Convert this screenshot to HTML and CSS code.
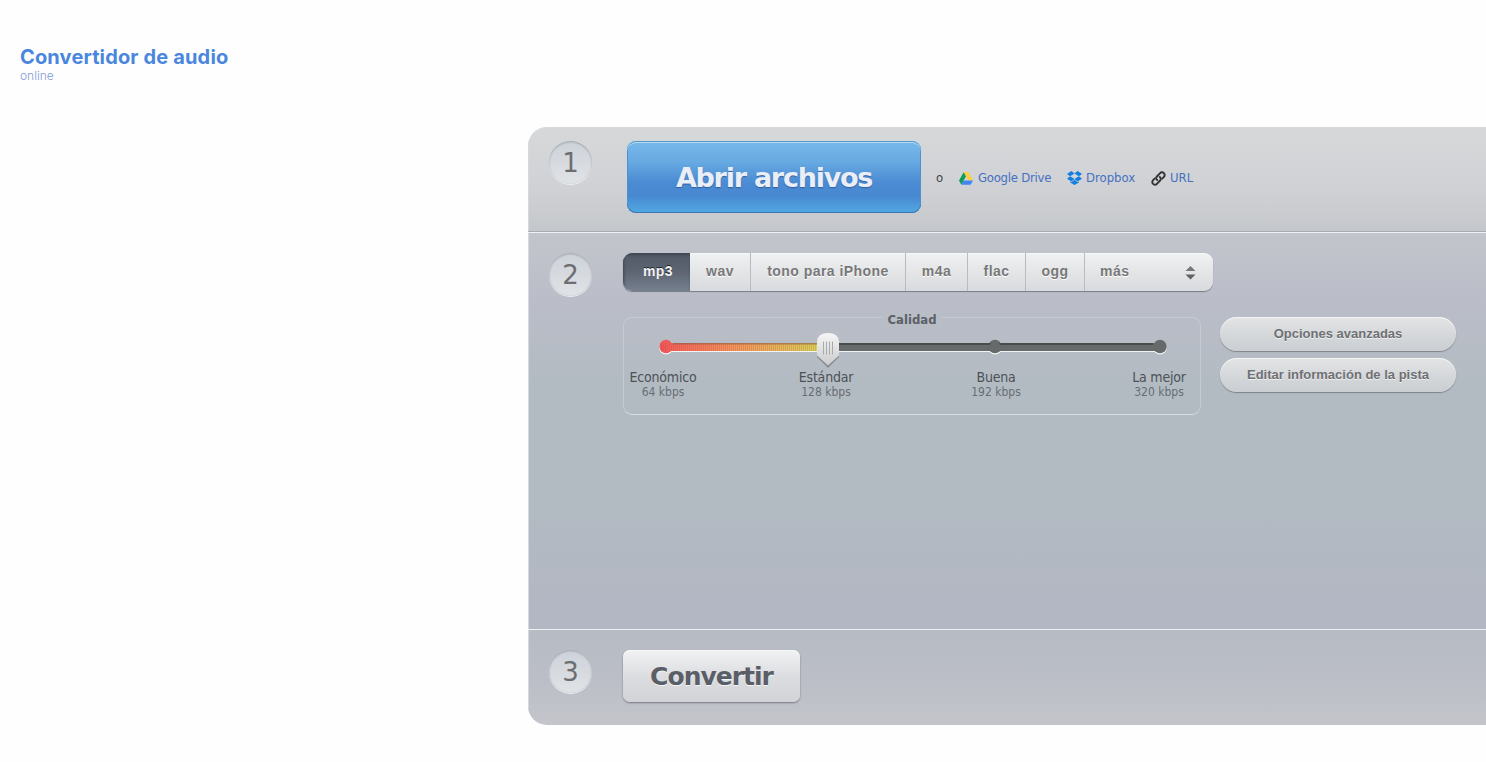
FILE: index.html
```html
<!DOCTYPE html>
<html lang="es">
<head>
    <meta charset="UTF-8">
    <meta name="viewport" content="width=device-width, initial-scale=1.0">
    <title>Convertidor de audio</title>
    <link rel="stylesheet" href="styles.css">
</head>
<body>

    <header>
        <h1>Convertidor de audio</h1>
        <p>online</p>
    </header>

    <main class="panel">
        <!-- Step 1: source -->
        <section class="step step-open">
            <div class="number">1</div>
            <button class="btn-open"><span>Abrir archivos</span></button>
            <div class="sources">
                <span class="or">o</span>
                <a href="#" class="drive">
                    <svg width="14" height="13" viewBox="0 0 14 13">
                        <path fill="#0f9d58" d="M4.8 0 0 8.5 2.3 12.7 7 4.3z"/>
                        <path fill="#ffcd40" d="M4.8 0h4.5L14 8.4H9.4z"/>
                        <path fill="#4285f4" d="M4.7 8.4H14l-2.4 4.3H2.3z"/>
                    </svg>
                    <span>Google Drive</span>
                </a>
                <a href="#" class="dropbox">
                    <svg width="15" height="14" viewBox="0 0 15 14">
                        <path fill="#117fe0" d="M4.4 0 0 2.9 3.1 5.3 7.5 2.6zM10.6 0 15 2.9 11.9 5.3 7.5 2.6zM0 7.8 3.1 5.3 7.5 8 4.4 10.6zM15 7.8 11.9 5.3 7.5 8l3.1 2.6zM7.5 8.7l3.1 2.5 1.3-.8v1L7.5 14l-4.4-2.6v-1l1.3.8z"/>
                    </svg>
                    <span>Dropbox</span>
                </a>
                <a href="#" class="link">
                    <svg width="15" height="15" viewBox="0 0 15 15" fill="none" stroke="#333" stroke-width="1.9" stroke-linecap="round">
                        <path d="M6.2 9.1C4.9 8 4.9 6.600 5.900 5.500L9.100 2.200C10.200 1 11.800 1 12.900 2.100 14 3.200 14 4.800 12.900 5.900L11.200 7.600"/>
                        <path d="M8.800 5.900C10.100 7 10.100 8.400 9.100 9.500L5.900 12.800C4.800 14 3.200 14 2.100 12.900 1 11.800 1 10.200 2.100 9.100L3.800 7.400"/>
                    </svg>
                    <span>URL</span>
                </a>
            </div>
        </section>

        <!-- Step 2: format and quality -->
        <section class="step step-format">
            <div class="number">2</div>
            <div class="settings">
                <ul class="formats">
                    <li class="mp3 active">mp3</li>
                    <li class="wav">wav</li>
                    <li class="iphone">tono para iPhone</li>
                    <li class="m4a">m4a</li>
                    <li class="flac">flac</li>
                    <li class="ogg">ogg</li>
                    <li class="more">más
                        <svg width="11" height="14" viewBox="0 0 11 14">
                            <path fill="#777" d="M5.500 0 10.500 5H.5z"/>
                            <path fill="#606163" d="M.5 8.500h10L5.500 13.500z"/>
                        </svg>
                    </li>
                </ul>

                <div class="options">
                    <div class="quality">
                        <div class="legend"><span>Calidad</span></div>
                        <svg class="slider" width="520" height="37" viewBox="0 0 520 37">
                            <defs>
                                <linearGradient id="level" x1="0" x2="1" y1="0" y2="0">
                                    <stop offset="0" stop-color="#f2605a"/>
                                    <stop offset=".45" stop-color="#f29a5c"/>
                                    <stop offset="1" stop-color="#d3d957"/>
                                </linearGradient>
                                <linearGradient id="knob" x1="0" x2="0" y1="0" y2="1">
                                    <stop offset="0" stop-color="#f6f6f6"/>
                                    <stop offset="1" stop-color="#cbcccd"/>
                                </linearGradient>
                                <pattern id="ticks" width="2" height="8" patternUnits="userSpaceOnUse">
                                    <rect width="1" height="8" fill="#a33" fill-opacity=".2"/>
                                </pattern>
                            </defs>
                            <g fill="#f3f4f5">
                                <rect x="13" y="12" width="494" height="8"/>
                                <circle cx="13" cy="15.500" r="7"/>
                                <circle cx="342" cy="15.500" r="7"/>
                                <circle cx="507" cy="15.500" r="7"/>
                            </g>
                            <g fill="#666a6a">
                                <rect x="13" y="11" width="494" height="8"/>
                                <circle cx="342" cy="14.500" r="6.700"/>
                                <circle cx="507" cy="14.500" r="6.700"/>
                            </g>
                            <rect x="20" y="11" width="480" height="2" fill="#484d4c"/>
                            <circle cx="342" cy="15" r="5.500" fill="#666a6a"/>
                            <circle cx="13" cy="14.500" r="6.700" fill="#ee5a58"/>
                            <rect x="13" y="11" width="160" height="8" fill="url(#level)"/>
                            <rect x="7" y="11" width="166" height="8" fill="url(#ticks)"/>
                            <rect x="20" y="11" width="153" height="1.500" fill="#8d5c44" fill-opacity=".6"/>
                            <path d="M164 10q0-7 11-7t11 7v15l-11 11-11-11z" fill="#555" fill-opacity=".45"/>
                            <path d="M164 9Q165 1 175 1t11 8V23.500L175 33.500 164 23.500z" fill="url(#knob)"/>
                            <path d="M170.500 9.500v13M173.500 9.500v13M176.500 9.500v13M179.500 9.500v13" stroke="#aaa" stroke-width="1"/>
                        </svg>
                        <div class="levels">
                            <div class="level"><b>Económico</b><span>64 kbps</span></div>
                            <div class="level"><b>Estándar</b><span>128 kbps</span></div>
                            <div class="level good"><b>Buena</b><span>192 kbps</span></div>
                            <div class="level"><b>La mejor</b><span>320 kbps</span></div>
                        </div>
                    </div>
                    <div class="extra">
                        <button class="btn-pill advanced">Opciones avanzadas</button>
                        <button class="btn-pill edit">Editar información de la pista</button>
                    </div>
                </div>
            </div>
        </section>

        <!-- Step 3: convert -->
        <section class="step step-convert">
            <div class="number">3</div>
            <button class="btn-convert">Convertir</button>
        </section>
    </main>

</body>
</html>
```
FILE: styles.css
```css
* {
    box-sizing: border-box;
}

body {
    margin: 0;
    height: 762px;
    overflow: hidden;
    background: #fefefe;
    font-family: "DejaVu Sans Condensed", "DejaVu Sans", sans-serif;
    color: #505256;
}

button {
    border: none;
    padding: 0;
    font-family: inherit;
    cursor: pointer;
}

header {
    height: 127px;
    padding: 45px 0 0 20px;
    font-family: Inter, sans-serif;
}

header h1 {
    margin: 0;
    font-size: 20px;
    line-height: 24px;
    font-weight: 700;
    letter-spacing: 0.15px;
    color: #4a86de;
}

header p {
    margin: 0;
    font-size: 12px;
    line-height: 14px;
    font-weight: 300;
    color: #7f9bd6;
}

/* Converter panel */
.panel {
    width: 1000px;
    height: 598px;
    margin-left: 528px;
    border-radius: 19px;
    overflow: hidden;
}

.step {
    display: flex;
    align-items: flex-start;
    padding-left: 21px;
    box-shadow: inset 1px 0 0 #d6d9dc;
}

.step-open {
    height: 105px;
    padding-top: 14px;
    background: linear-gradient(#d6d8d9, #d0d1d5 60%, #c4c7cb);
    border-bottom: 1px solid #a9acb1;
}

.step-format {
    height: 397px;
    padding-top: 20px;
    border-top: 1px solid #f0f1f2;
    background: linear-gradient(#c2c5cb, #babdc8 18%, #b3bbc2 38%, #b2bac2 70%, #b3b6c3);
}

.step-convert {
    height: 96px;
    padding-top: 20px;
    border-top: 1px solid #f0f1f3;
    background: linear-gradient(#b6bbc4, #bbbec7 50%, #c3c5ca);
}

.number {
    width: 43px;
    height: 43px;
    flex: none;
    border-radius: 50%;
    background: linear-gradient(#cdd2d9, #e0e3e6);
    box-shadow: inset 0 1px 2px #9ea4ac, 0 1px 0 #eceef0;
    font-family: "DejaVu Sans", sans-serif;
    font-size: 26px;
    line-height: 45px;
    text-align: center;
    color: #6c6e71;
}

.btn-open {
    width: 294px;
    height: 72px;
    margin-left: 35px;
    border-radius: 9px;
    background: linear-gradient(#78b9ea, #68aae2 28%, #4a8bd3 58%, #4788d0 76%, #51a9e3);
    box-shadow: inset 0 1px 0 #5596cc, inset 0 2px 0 #b4dcf6, inset 0 -1px 0 #3c77ac, inset 1px 0 #4e91cf, inset -1px 0 #4e91cf;
    font-family: "DejaVu Sans", sans-serif;
    font-size: 27px;
    font-weight: 700;
    letter-spacing: -1.25px;
    color: #eaeef7;
    text-shadow: 0 1px 1px #345f9d;
}

.sources {
    display: flex;
    height: 74px;
    align-items: center;
    font-size: 13px;
    line-height: 18px;
}

.sources .or {
    width: 23px;
    margin-left: 15px;
    color: #444;
}

.sources a {
    display: flex;
    align-items: center;
    color: #4471c1;
    text-decoration: none;
}

.drive {
    width: 108px;
    gap: 5px;
    letter-spacing: -0.25px;
}

.dropbox {
    width: 84px;
    gap: 4px;
}

.link {
    gap: 4px;
}

/* Formats */
.settings {
    margin-left: 31px;
}

.formats {
    display: flex;
    width: 590px;
    height: 38px;
    margin: 0;
    padding: 0;
    list-style: none;
    border-radius: 9px;
    overflow: hidden;
    background: linear-gradient(#f0f1f2, #e3e4e6 55%, #d8dadd);
    box-shadow: inset 0 1px 0 #f8f8f8, 0 1px 1px #777c86;
    font: bold 14px/36px "Liberation Sans", Arial, sans-serif;
    letter-spacing: 0.45px;
    color: #777879;
    text-align: center;
    text-shadow: 0 1px 0 #fff;
}

.formats li {
    border-left: 1px solid #b9bbbf;
}

.formats .active {
    border-left: none;
    padding-left: 3px;
    background: linear-gradient(#525a68, #5d6572 50%, #76808e);
    box-shadow: inset 1px 2px 3px #3f4652;
    color: #f2f3f6;
    text-shadow: 0 -1px 0 #222;
}

.formats .mp3 { width: 67px; }
.formats .wav { width: 60px; border-left: none; }
.formats .iphone { width: 155px; }
.formats .m4a { width: 62px; }
.formats .flac { width: 58px; }
.formats .ogg { width: 59px; }

.formats .more {
    display: flex;
    flex: 1;
    justify-content: space-between;
    padding: 0 17px 0 15px;
}

.formats .more svg {
    margin-top: 13px;
}

/* Quality */
.options {
    display: flex;
    gap: 19px;
    margin-top: 26px;
}

.quality {
    width: 578px;
    height: 98px;
    border: 1px solid #c7cbd1;
    border-bottom-color: #d8dcdf;
    border-radius: 9px;
}

.legend {
    height: 14px;
    margin-top: -8px;
    font-size: 13px;
    font-weight: 700;
    line-height: 20px;
    text-align: center;
    color: #5c6069;
}

.legend span {
    padding: 0 5px;
    background: #b8bdc6;
}

.slider {
    display: block;
    margin: 8px 0 0 29px;
}

.levels {
    display: flex;
    gap: 85px;
}

.level {
    width: 78px;
    flex: none;
    text-align: center;
}

.level.good {
    margin-left: 7px;
}

.level b,
.level span {
    display: block;
    font-weight: 400;
    white-space: nowrap;
}

.level b {
    font-size: 14px;
    line-height: 16px;
    letter-spacing: -0.2px;
    color: #4d5157;
}

.level span {
    font-size: 12px;
    line-height: 15px;
    color: #686d73;
}

.extra {
    display: flex;
    flex-direction: column;
    gap: 7px;
}

.btn-pill {
    width: 236px;
    height: 34px;
    border-radius: 17px;
    background: linear-gradient(#e3e4e5, #d3d6d9 60%, #cbced2);
    box-shadow: inset 0 1px 0 #f4f5f5, 0 1px 1px #7d838c;
    font: bold 13px/32px "Liberation Sans", Arial, sans-serif;
    color: #6e7074;
    text-shadow: 0 1px 0 #eee;
}

.btn-convert {
    width: 177px;
    height: 52px;
    margin-left: 31px;
    border-radius: 7px;
    background: linear-gradient(#f1f2f3, #dcdde0 50%, #d2d3d7);
    box-shadow: inset 0 1px 0 #fafafa, 0 1px 2px #71767e;
    font-family: "DejaVu Sans", sans-serif;
    font-size: 25px;
    font-weight: 700;
    letter-spacing: -1px;
    color: #595e67;
    text-shadow: 0 1px 0 #f4f4f4;
}
```
